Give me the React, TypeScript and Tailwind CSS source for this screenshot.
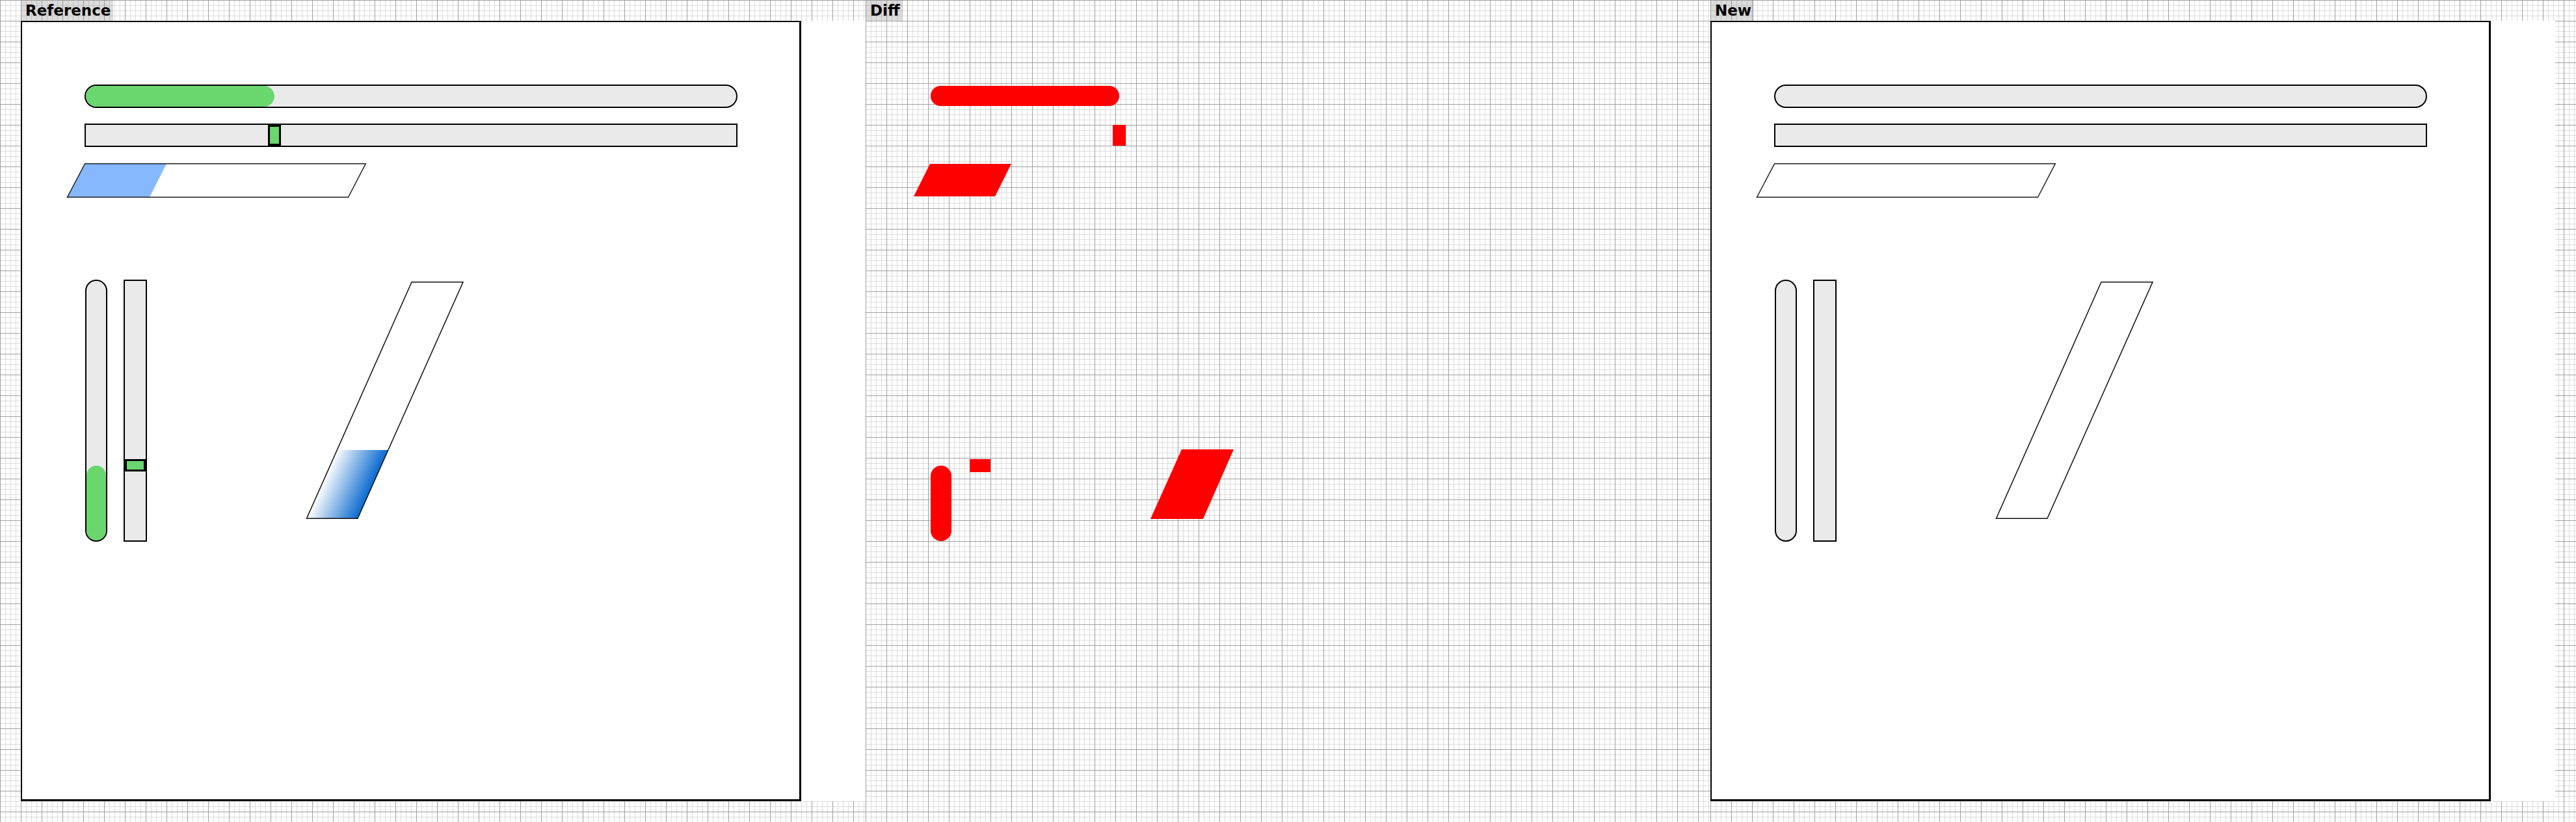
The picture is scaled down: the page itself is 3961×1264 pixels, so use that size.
import React from "react";

const GRID =
  "[background-image:linear-gradient(to_right,#a0a0a0_1px,transparent_1px),linear-gradient(to_bottom,#a0a0a0_1px,transparent_1px),linear-gradient(to_right,#dcdcdc_1px,transparent_1px),linear-gradient(to_bottom,#dcdcdc_1px,transparent_1px)] [background-size:32px_32px,32px_32px,8px_8px,8px_8px] bg-white";

const GREEN = "bg-[#6ad66e]";

function Label({ text }: { text: string }) {
  return (
    <div className="self-start h-8 pl-[7px] pr-[4px] bg-[rgba(128,128,128,0.28)] font-['DejaVu_Sans',sans-serif] font-bold text-[23px] leading-8 text-black whitespace-nowrap">
      {text}
    </div>
  );
}

function HPara({ filled }: { filled: boolean }) {
  return (
    <svg width="461" height="53" className="mt-[25px] ml-[-27px] overflow-visible">
      {filled && <polygon points="27.6,0.75 153,0.75 127,52.25 0.5,52.25" fill="#85b8ff" />}
      <polygon
        points="27.6,0.75 459.3,0.75 432.5,52.25 0.5,52.25"
        fill="none"
        stroke="#222"
        strokeWidth="1.5"
        strokeLinejoin="miter"
      />
    </svg>
  );
}

function VPara({ filled }: { filled: boolean }) {
  return (
    <svg width="242" height="366" className="ml-[245px] mt-[3px] overflow-visible">
      <defs>
        <linearGradient
          id="vgrad"
          gradientUnits="userSpaceOnUse"
          x1="0"
          y1="300"
          x2="79"
          y2="300"
          gradientTransform="matrix(1 0 -0.445 1 162 0)"
        >
          <stop offset="0" stopColor="#ffffff" />
          <stop offset="1" stopColor="#0a6ad0" />
        </linearGradient>
      </defs>
      {filled && <polygon points="46.7,259 125.7,259 79,364 0,364" fill="url(#vgrad)" />}
      <polygon
        points="162,0.75 241,0.75 79,364.25 0.5,364.25"
        fill="none"
        stroke="#111"
        strokeWidth="1.5"
      />
    </svg>
  );
}

function Panel({ filled }: { filled: boolean }) {
  return (
    <div className="w-[1299px] h-[1200px] bg-white shrink-0">
      <div className="w-[1200px] h-[1200px] border-l-2 border-t-2 border-r-[3px] border-b-[3px] border-black pl-[96px] pt-[96px] flex flex-col items-start">
        {/* horizontal progress pill */}
        <div className="relative w-[1004px] h-[36px] rounded-full border-2 border-black bg-[#eaeaea] overflow-hidden">
          {filled && <div className={`absolute left-0 top-0 h-full w-[290px] rounded-full ${GREEN}`} />}
        </div>
        {/* horizontal slider */}
        <div className="relative mt-[24px] w-[1004px] h-[36px] border-2 border-black bg-[#eaeaea]">
          {filled && (
            <div className={`absolute left-[280px] top-0 h-full w-[20px] border-[3px] border-black ${GREEN}`} />
          )}
        </div>
        <HPara filled={filled} />
        {/* vertical row */}
        <div className="mt-[126px] flex items-start">
          <div className="relative ml-[1px] w-[34px] h-[403px] rounded-full border-2 border-black bg-[#eaeaea] overflow-hidden">
            {filled && <div className={`absolute left-0 bottom-0 w-full h-[115px] rounded-full ${GREEN}`} />}
          </div>
          <div className="relative ml-[25px] w-[36px] h-[403px] border-2 border-black bg-[#eaeaea]">
            {filled && (
              <div className={`absolute left-0 top-[274px] w-full h-[19px] border-[3px] border-black ${GREEN}`} />
            )}
          </div>
          <VPara filled={filled} />
        </div>
      </div>
    </div>
  );
}

function DiffPanel() {
  return (
    <div className="w-[1299px] h-[1200px] shrink-0 pl-[100px] pt-[100px] flex flex-col items-start">
      <div className="w-[290px] h-[31px] rounded-full bg-[#ff0000]" />
      <div className="mt-[29px] ml-[280px] w-[20px] h-[32px] bg-[#ff0000]" />
      <svg width="150" height="50" className="mt-[28px] ml-[-26px]">
        <polygon points="25,0 150,0 125,50 0,50" fill="#ff0000" />
      </svg>
      <div className="mt-[389px] flex items-start">
        <div className="mt-[25px] w-[32px] h-[116px] rounded-full bg-[#ff0000]" />
        <div className="mt-[15px] ml-[28px] w-[32px] h-[20px] bg-[#ff0000]" />
        <svg width="128" height="107" className="ml-[246px]">
          <polygon points="48,0 128,0 81,107 0,107" fill="#ff0000" />
        </svg>
      </div>
    </div>
  );
}

function Column({
  label,
  className,
  children,
}: {
  label: string;
  className: string;
  children: React.ReactNode;
}) {
  return (
    <div className={`${GRID} h-full flex flex-col ${className}`}>
      <Label text={label} />
      {children}
    </div>
  );
}

export default function App() {
  return (
    <div className={`${GRID} w-[3961px] h-[1264px] flex overflow-hidden`}>
      <div className="w-[32px] shrink-0" />
      <Column label="Reference" className="w-[1299px] shrink-0">
        <Panel filled />
      </Column>
      <Column label="Diff" className="w-[1299px] shrink-0">
        <DiffPanel />
      </Column>
      <Column label="New" className="flex-1 min-w-0">
        <Panel filled={false} />
      </Column>
    </div>
  );
}
